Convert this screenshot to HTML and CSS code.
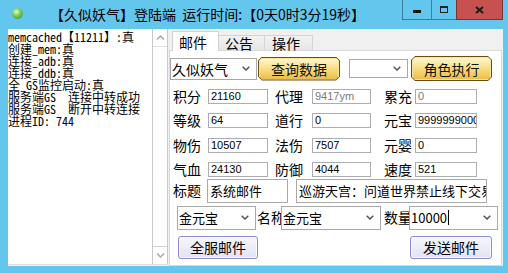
FILE: index.html
```html
<!DOCTYPE html>
<html>
	<head>
		<meta charset="utf-8">
		<title>久似妖气 登陆端</title>
		<link rel="stylesheet" href="styles.css">
	</head>
	<body>
		<div class="window">
			<div class="titlebar">
				<span class="app-icon"></span>
				<span class="title">【久似妖气】登陆端  运行时间:【0天0时3分19秒】</span>
				<div class="caption">
					<span class="cap-btn min"><i></i></span>
					<span class="cap-btn max"><i></i></span>
					<span class="cap-btn close">
						<svg width="9" height="8" viewBox="0 0 9 8"><path d="M1 1 L8 7 M8 1 L1 7" stroke="#1b1b1b" stroke-width="2" fill="none"/></svg>
					</span>
				</div>
			</div>
			<div class="client">
				<!-- 日志 -->
				<div class="log">
					<div class="log-lines">
						<p>memcached【11211】:真</p>
						<p>创建_mem:真</p>
						<p>连接_adb:真</p>
						<p>连接_ddb:真</p>
						<p>全_GS监控启动:真</p>
						<p>服务端GS  连接中转成功</p>
						<p>服务端GS  断开中转连接</p>
						<p>进程ID: 744</p>
					</div>
					<div class="vscroll">
						<span class="sb-arrow"><svg width="9" height="5" viewBox="0 0 9 5"><polyline points="1,4.5 4.5,1 8,4.5" stroke="#a6a6a6" stroke-width="1.4" fill="none"/></svg></span>
						<span class="sb-track"></span>
						<span class="sb-arrow"><svg width="9" height="5" viewBox="0 0 9 5"><polyline points="1,0.5 4.5,4 8,0.5" stroke="#a6a6a6" stroke-width="1.4" fill="none"/></svg></span>
					</div>
				</div>
				<!-- 选项卡 -->
				<div class="tabs">
					<div class="tab-heads">
						<span class="tab active">邮件</span>
						<span class="tab">公告</span>
						<span class="tab last">操作</span>
					</div>
					<div class="tab-page">
						<div class="row-top">
							<div class="combo c-role"><span class="val">久似妖气</span><svg class="chev" width="8" height="5" viewBox="0 0 8 5"><polyline points="0.7,0.7 4,4 7.3,0.7" stroke="#555" stroke-width="1.5" fill="none"/></svg></div>
							<button class="gold g-query"><span>查询数据</span></button>
							<div class="combo c-cmd"><span class="val"></span><svg class="chev" width="8" height="5" viewBox="0 0 8 5"><polyline points="0.7,0.7 4,4 7.3,0.7" stroke="#555" stroke-width="1.5" fill="none"/></svg></div>
							<button class="gold g-exec"><span>角色执行</span></button>
						</div>

						<div class="stats">
							<div class="stat-row">
								<span class="lab l1">积分</span><span class="field f1">21160</span>
								<span class="lab l2">代理</span><span class="field f2 dim">9417ym</span>
								<span class="lab l3">累充</span><span class="field f3 dim">0</span>
							</div>
							<div class="stat-row">
								<span class="lab l1">等级</span><span class="field f1">64</span>
								<span class="lab l2">道行</span><span class="field f2">0</span>
								<span class="lab l3">元宝</span><span class="field f3">9999999000</span>
							</div>
							<div class="stat-row">
								<span class="lab l1">物伤</span><span class="field f1">10507</span>
								<span class="lab l2">法伤</span><span class="field f2">7507</span>
								<span class="lab l3">元婴</span><span class="field f3">0</span>
							</div>
							<div class="stat-row">
								<span class="lab l1">气血</span><span class="field f1">24130</span>
								<span class="lab l2">防御</span><span class="field f2">4044</span>
								<span class="lab l3">速度</span><span class="field f3">521</span>
							</div>
						</div>

						<div class="row-title">
							<span class="lab lt">标题</span>
							<span class="input i-title">系统邮件</span>
							<span class="input i-body">巡游天宫：问道世界禁止线下交易，违者封号</span>
						</div>

						<div class="row-item">
							<div class="combo c-kind"><span class="val">金元宝</span><svg class="chev" width="8" height="5" viewBox="0 0 8 5"><polyline points="0.7,0.7 4,4 7.3,0.7" stroke="#555" stroke-width="1.5" fill="none"/></svg></div>
							<span class="lab ln">名称</span>
							<div class="combo c-name"><span class="val">金元宝</span><svg class="chev" width="8" height="5" viewBox="0 0 8 5"><polyline points="0.7,0.7 4,4 7.3,0.7" stroke="#555" stroke-width="1.5" fill="none"/></svg></div>
							<span class="lab lq">数量</span>
							<div class="combo c-num"><span class="val">10000<i class="caret"></i></span><svg class="chev" width="8" height="5" viewBox="0 0 8 5"><polyline points="0.7,0.7 4,4 7.3,0.7" stroke="#555" stroke-width="1.5" fill="none"/></svg></div>
						</div>

						<div class="row-btns">
							<button class="win-btn b-all">全服邮件</button>
							<button class="win-btn b-send">发送邮件</button>
						</div>
					</div>
				</div>
			</div>
		</div>
	</body>
</html>
```

FILE: styles.css
```css
*{
	margin: 0;
	padding: 0;
	box-sizing: border-box;
}
body{
	width: 508px;
	height: 273px;
	overflow: hidden;
	font-family: "Noto Sans CJK SC", "Liberation Sans", sans-serif;
	color: #000;
}
.window{
	width: 508px;
	height: 273px;
	background: #63c6ec;
	display: flex;
	flex-direction: column;
}

/* 标题栏 */
.titlebar{
	height: 29px;
	flex-shrink: 0;
	display: flex;
	align-items: flex-start;
}
.app-icon{
	width: 11px;
	height: 11px;
	margin: 8px 0 0 12px;
	border-radius: 50%;
	background: radial-gradient(circle at 40% 35%, #e4f9d0 0, #74c850 45%, #2f8a2c 100%);
}
.title{
	margin: 5px 0 0 27px;
	font-size: 14px;
	line-height: 19px;
	white-space: pre;
}
.caption{
	margin-left: auto;
	margin-right: 5px;
	display: flex;
	height: 20px;
}
.cap-btn{
	height: 20px;
	display: flex;
	align-items: center;
	justify-content: center;
	border: 1px solid #3a7d9c;
	border-top: 0;
}
.cap-btn.min{
	width: 29px;
	border-right: 0;
}
.cap-btn.min i{
	width: 8px;
	height: 3px;
	margin-top: 4px;
	background: #111;
}
.cap-btn.max{
	width: 25px;
	border-right: 0;
}
.cap-btn.max i{
	width: 8px;
	height: 7px;
	border: 1px solid #222;
	border-top-width: 2px;
}
.cap-btn.close{
	width: 47px;
	background: #c75050;
	border-color: #7a3232;
}

/* 客户区 */
.client{
	flex: 1;
	min-height: 0;
	margin: 0 5px 7px 8px;
	background: #f0f0f0;
	display: flex;
	overflow: hidden;
}
.log{
	width: 160px;
	margin-bottom: 1px;
	background: #fff;
	border-bottom: 1px solid #e4dede;
	display: flex;
}
.log-lines{
	flex: 1;
	padding-top: 2px;
	font-family: "Noto Sans Mono CJK SC", "Liberation Mono", monospace;
	font-size: 12px;
	overflow: hidden;
}
.log-lines p{
	height: 12px;
	line-height: 12px;
	white-space: pre;
}
.vscroll{
	width: 16px;
	display: flex;
	flex-direction: column;
	border-left: 1px solid #c8c8c8;
	border-right: 1px solid #c8c8c8;
}
.sb-arrow{
	height: 17px;
	display: flex;
	align-items: center;
	justify-content: center;
}
.sb-track{
	flex: 1;
	border-top: 1px solid #e2e2e2;
	border-bottom: 1px solid #d0d0d0;
}

/* 选项卡 */
.tabs{
	width: 333px;
	margin-left: 1px;
	display: flex;
	flex-direction: column;
}
.tab-heads{
	height: 21px;
	flex-shrink: 0;
	padding-left: 3px;
	display: flex;
	align-items: flex-end;
}
.tab{
	position: relative;
	width: 47px;
	height: 15px;
	padding-left: 6px;
	margin-left: -1px;
	border: 1px solid #d4d4d4;
	border-bottom: 0;
	background: linear-gradient(#f2f2f2, #e6e6e6);
	font-size: 14px;
	line-height: 14px;
}
.tab.active{
	height: 20px;
	margin-left: 0;
	margin-bottom: -1px;
	padding-top: 3px;
	background: #fff;
	z-index: 1;
}
.tab.last{
	width: 49px;
	padding-left: 7px;
}
.tab-page{
	flex: 1;
	background: #fff;
	border: 1px solid #d9d9d9;
	display: flex;
	flex-direction: column;
}

/* 下拉框 */
.combo{
	display: flex;
	align-items: center;
	background: #fff;
	border: 1px solid #a9a9a9;
	font-size: 14px;
}
.combo .val{
	flex: 1;
	padding-left: 1px;
	white-space: nowrap;
	overflow: hidden;
	display: flex;
	align-items: center;
}
.combo .chev{
	margin: 0 6px 0 4px;
}
.caret{
	display: inline-block;
	width: 1px;
	height: 15px;
	margin-left: 1px;
	background: #000;
}

/* 金色按钮 */
.gold{
	height: 24px;
	padding: 1px;
	border: 0;
	background: #6e4c12;
	font-family: inherit;
	clip-path: polygon(4px 0, calc(100% - 4px) 0, 100% 4px, 100% calc(100% - 4px), calc(100% - 4px) 100%, 4px 100%, 0 calc(100% - 4px), 0 4px);
}
.gold span{
	display: flex;
	height: 100%;
	align-items: center;
	justify-content: center;
	border: 1px solid #fbe49a;
	background: linear-gradient(#fff6cf, #f8da7c 55%, #ecbd48);
	font-size: 14px;
	color: #111;
	clip-path: polygon(3px 0, calc(100% - 3px) 0, 100% 3px, 100% calc(100% - 3px), calc(100% - 3px) 100%, 3px 100%, 0 calc(100% - 3px), 0 3px);
}

.row-top{
	height: 25px;
	margin-top: 5px;
	display: flex;
	align-items: center;
}
.c-role{
	width: 87px;
	height: 22px;
}
.g-query{
	width: 82px;
	margin-left: 1px;
}
.c-cmd{
	width: 59px;
	height: 19px;
	margin-left: 9px;
}
.g-exec{
	width: 81px;
	height: 25px;
	margin-left: 3px;
}

/* 属性 */
.lab{
	font-size: 14px;
	line-height: 15px;
	white-space: nowrap;
}
.stats{
	margin-top: 8px;
	padding-left: 3px;
	display: flex;
	flex-direction: column;
	gap: 9.3px;
}
.stat-row{
	height: 15px;
	display: flex;
}
.field{
	height: 15px;
	padding-left: 2px;
	border: 1px solid #abadb3;
	font-family: "Liberation Sans", sans-serif;
	font-size: 11px;
	line-height: 13px;
	white-space: nowrap;
	overflow: hidden;
}
.field.dim{
	color: #7a7a7a;
}
.l1{ width: 35px; }
.f1{ width: 60px; }
.l2{ width: 37px; margin-left: 7px; }
.f2{ width: 59px; }
.l3{ width: 31px; margin-left: 13px; }
.f3{ width: 62px; }

/* 邮件内容 */
.input{
	height: 24px;
	padding-left: 2px;
	border: 1px solid #a9a9a9;
	font-size: 13px;
	line-height: 22px;
	white-space: nowrap;
	overflow: hidden;
}
.row-title{
	margin-top: 2px;
	padding-left: 3px;
	display: flex;
	align-items: center;
}
.lt{ width: 34px; }
.i-title{ width: 81px; }
.i-body{
	width: 191px;
	margin-left: 8px;
}

.row-item{
	height: 24px;
	margin-top: 3px;
	padding-left: 7px;
	display: flex;
	align-items: center;
}
.row-item .combo{
	height: 24px;
	font-size: 13px;
}
.c-kind{ width: 79px; }
.ln{ width: 24px; margin-left: 1px; }
.c-name{ width: 100px; }
.lq{ width: 25px; margin-left: 3px; }
.c-num{ width: 89px; }

.row-btns{
	margin-top: 6px;
	padding: 0 9px 0 8px;
	display: flex;
	justify-content: space-between;
}
.win-btn{
	height: 23px;
	border: 1px solid #8a8ccc;
	border-radius: 3px;
	background: linear-gradient(#f6f6fd, #e2e3f3);
	box-shadow: inset 0 0 0 1px #fbfbff;
	font-family: inherit;
	font-size: 14px;
	color: #000;
}
.b-all{ width: 80px; }
.b-send{ width: 82px; }
```
